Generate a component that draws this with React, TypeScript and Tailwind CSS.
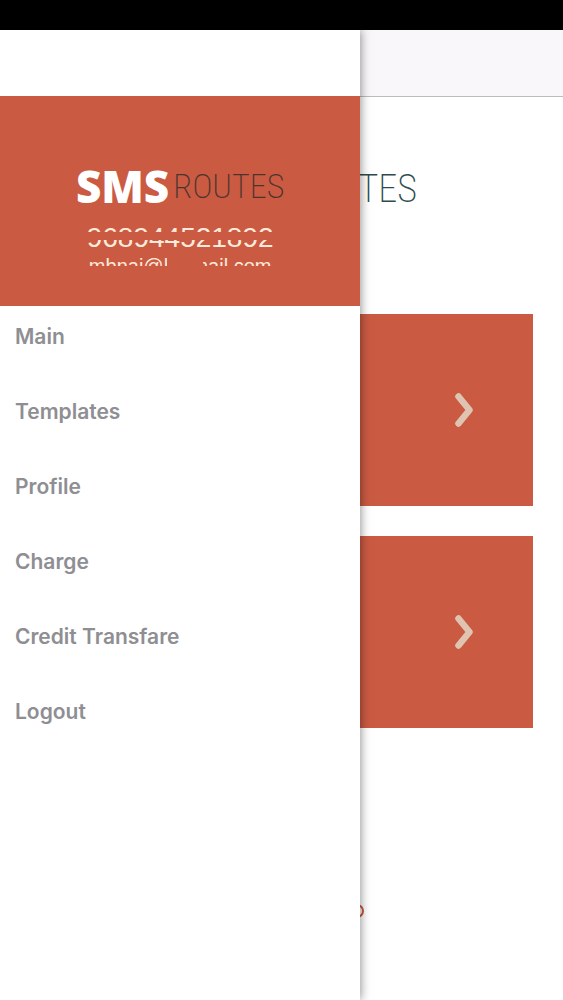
import React from "react";

const MENU_ITEMS = ["Main", "Templates", "Profile", "Charge", "Credit Transfare", "Logout"];

const App: React.FC = () => {
  return (
    <div className="relative flex min-h-screen flex-col bg-white font-['Inter',sans-serif]">
      <div className="h-[30px] bg-black" />
      <div className="relative flex-1 overflow-hidden">
        <HomeScreen />
        <Drawer />
      </div>
    </div>
  );
};

export default App;

const HomeScreen: React.FC = () => {
  return (
    <main className="flex flex-col">
      <header className="h-[67px] border-b border-[#b9bdbd] bg-[#f9f7fa]" />
      <div className="flex h-[217px] items-start justify-end pt-[64px] pr-[146px] font-['Roboto_Condensed','Roboto',sans-serif] text-[38px] leading-[56px] font-extralight text-[#2f4b4d]">
        TES
      </div>
      <div className="flex flex-col gap-[30px] px-[30px]">
        <ActionCard label="Send message" />
        <ActionCard label="Send bulk message" />
      </div>
      <div className="flex justify-center pt-[176px] pl-[150px]">
        <svg width="14" height="14" viewBox="0 0 14 14" fill="none" aria-hidden="true">
          <circle cx="7" cy="7" r="6" stroke="#cb5a42" strokeWidth="2" />
        </svg>
      </div>
    </main>
  );
};

const Drawer: React.FC = () => {
  return (
    <aside className="absolute inset-y-0 left-0 w-[64%] bg-white shadow-[0_0_10px_rgba(0,0,0,0.5)]">
      <div className="h-[66px]" />
      <div className="flex h-[210px] flex-col items-center bg-[#cb5a42] pt-[64px]">
        <Logo />
        {/* number and address are only partly legible behind the strips */}
        <div className="relative mt-3 font-['Liberation_Sans',sans-serif] text-[28px] leading-7 text-[#fdeadb]">
          968944521892
          <span className="absolute inset-x-0 top-[8px] h-[8px] bg-[#cb5a42]" />
        </div>
        <div className="relative mt-[2px] font-['Liberation_Sans',sans-serif] text-xl leading-6 text-[#fdeadb]">
          mbnaj@hotmail.com
          <span className="absolute inset-x-0 bottom-0 h-[12px] bg-[#cb5a42]" />
          <span className="absolute inset-y-0 left-[78px] w-[36px] bg-[#cb5a42]" />
        </div>
      </div>
      <nav className="flex flex-col">
        {MENU_ITEMS.map((item) => (
          <a
            key={item}
            href="#"
            className="flex h-[75px] items-start px-[15px] pt-[15px] text-[21px] leading-8 font-semibold text-[#8e8e93]"
          >
            {item}
          </a>
        ))}
      </nav>
    </aside>
  );
};

const Logo: React.FC = () => {
  return (
    <div className="flex items-center gap-1 leading-[52px] whitespace-nowrap">
      <span className="font-['Open_Sans',sans-serif] text-[44px] font-extrabold text-white">SMS</span>
      <span className="font-['Roboto_Condensed','Roboto',sans-serif] text-[34px] font-extralight text-[#4a342e]">
        ROUTES
      </span>
    </div>
  );
};

type ActionCardProps = {
  label: string;
};

const ActionCard: React.FC<ActionCardProps> = ({ label }) => {
  return (
    <button
      type="button"
      aria-label={label}
      className="flex h-[192px] items-center justify-end bg-[#cb5a42] pr-[58px]"
    >
      <svg width="22" height="36" viewBox="0 0 22 36" fill="none" aria-hidden="true">
        <path d="M5.500 4.500L16.500 18L5.500 31.500" stroke="#dfc4b2" strokeWidth="6.500" strokeLinecap="round" strokeLinejoin="round" />
      </svg>
    </button>
  );
};
